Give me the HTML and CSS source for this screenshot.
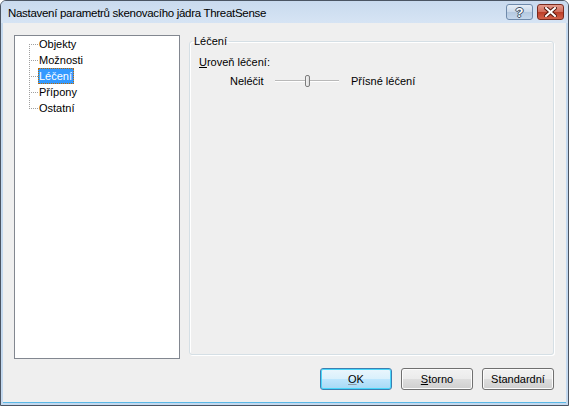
FILE: index.html
```html
<!DOCTYPE html>
<html lang="cs">
<head>
  <meta charset="UTF-8" />
  <title>Nastavení parametrů skenovacího jádra ThreatSense</title>
  <link rel="stylesheet" href="styles.css">
</head>
<body>

  <div class="window">
    <div class="titlebar">
      <span class="title">Nastavení parametrů skenovacího jádra ThreatSense</span>
      <div class="caption-buttons">
        <div class="cap-btn help">?</div>
        <div class="cap-btn close">
          <svg width="13" height="10" viewBox="0 0 13 10">
            <path d="M2 1 L11 9 M11 1 L2 9" stroke="#5a1a10" stroke-width="4" stroke-linecap="square"/>
            <path d="M2 1 L11 9 M11 1 L2 9" stroke="#fff" stroke-width="2" stroke-linecap="square"/>
          </svg>
        </div>
      </div>
    </div>

    <div class="client">
      <div class="main">
        <ul class="tree">
          <li class="first"><span class="label">Objekty</span></li>
          <li><span class="label">Možnosti</span></li>
          <li><span class="label selected">Léčení</span></li>
          <li><span class="label">Přípony</span></li>
          <li class="last"><span class="label">Ostatní</span></li>
        </ul>

        <fieldset class="group">
          <legend>Léčení</legend>
          <div class="level-label"><u>U</u>roveň léčení:</div>
          <div class="slider-row">
            <span class="slider-min">Neléčit</span>
            <div class="slider">
              <div class="thumb"></div>
            </div>
            <span class="slider-max">Přísné léčení</span>
          </div>
        </fieldset>
      </div>

      <div class="buttons">
        <button class="btn default"><u>O</u>K</button>
        <button class="btn"><u>S</u>torno</button>
        <button class="btn">Standardní</button>
      </div>
    </div>
  </div>

</body>
</html>
```

FILE: styles.css
```css
:root {
  --frame: #c4d9ef;
  --client: #efefef;
  --text: #000;
  --tree-border: #828790;
  --group-border: #d5dfe5;
}

* {
  box-sizing: border-box;
}

body {
  margin: 0;
  background: #fff;
  font-family: 'Liberation Sans', Arial, sans-serif;
  font-size: 11px;
  color: var(--text);
}

.window {
  width: 569px;
  height: 406px;
  display: flex;
  flex-direction: column;
  background: var(--frame);
  border: 1px solid #4b5563;
  border-radius: 6px 6px 0 0;
  overflow: hidden;
}

.titlebar {
  height: 22px;
  flex: none;
  display: flex;
  align-items: center;
  justify-content: space-between;
  padding: 0 4px 0 7px;
  background: linear-gradient(#c9daee, #d6e4f4);
}

.title {
  font-size: 11.5px;
  letter-spacing: -0.3px;
  padding-top: 1px;
}

.caption-buttons {
  display: flex;
  gap: 4px;
  align-self: flex-start;
  margin-top: 3px;
}

.cap-btn {
  width: 27px;
  height: 16px;
  border-radius: 3px;
  display: flex;
  align-items: center;
  justify-content: center;
}

.help {
  border: 1px solid #6f8aab;
  background: linear-gradient(#e6eef7 0%, #c9d8ea 50%, #b4c8df 51%, #c5d7ec 100%);
  color: #fff;
  font-weight: bold;
  font-size: 13px;
  text-shadow: 0 0 1px #3c4f66, 1px 0 0 #3c4f66, -1px 0 0 #3c4f66, 0 1px 0 #3c4f66, 0 -1px 0 #3c4f66;
}

.close {
  border: 1px solid #7a2a1e;
  background: linear-gradient(#e39a8c 0%, #d16c5a 50%, #bb3d27 51%, #d3624b 100%);
}

.client {
  flex: 1;
  margin: 0 2px 2px 2px;
  background: var(--client);
  display: flex;
  flex-direction: column;
  padding: 12px 12px 0 11px;
  border-bottom: 1px solid #5ab8e6;
}

.main {
  display: flex;
  gap: 9px;
  height: 324px;
}

.tree {
  width: 166px;
  flex: none;
  margin: 0;
  padding: 0 0 0 14px;
  list-style: none;
  background: #fff;
  border: 1px solid var(--tree-border);
}

.tree li {
  display: flex;
  align-items: center;
  height: 16px;
}

.tree li::before {
  content: "";
  width: 9px;
  height: 16px;
  flex: none;
  background:
    repeating-linear-gradient(to right, #a0a0a0 0 1px, transparent 1px 2px) 0 8px / 9px 1px no-repeat,
    repeating-linear-gradient(to bottom, #a0a0a0 0 1px, transparent 1px 2px) 0 0 / 1px 16px no-repeat;
}

.tree li.first::before {
  background:
    repeating-linear-gradient(to right, #a0a0a0 0 1px, transparent 1px 2px) 0 8px / 9px 1px no-repeat,
    repeating-linear-gradient(to bottom, #a0a0a0 0 1px, transparent 1px 2px) 0 8px / 1px 8px no-repeat;
}

.tree li.last::before {
  background:
    repeating-linear-gradient(to right, #a0a0a0 0 1px, transparent 1px 2px) 0 8px / 9px 1px no-repeat,
    repeating-linear-gradient(to bottom, #a0a0a0 0 1px, transparent 1px 2px) 0 0 / 1px 9px no-repeat;
}

.label {
  line-height: 14px;
  padding: 0 1px 0 0;
  border: 1px solid transparent;
}

.label.selected {
  background: #3399ff;
  color: #fff;
  border: 1px dotted #c06a00;
}

.group {
  flex: 1;
  margin: 0 0 4px 0;
  padding: 0 9px;
  border: 1px solid var(--group-border);
  border-radius: 3px;
  box-shadow: inset 1px 1px 0 #fff, 1px 1px 0 #fff;
  min-width: 0;
}

.group legend {
  margin-left: -7px;
  padding: 0 2px;
  line-height: 13px;
}

.level-label {
  margin-top: 8px;
  line-height: 13px;
}

.slider-row {
  display: flex;
  align-items: center;
  margin-top: 6px;
  padding-left: 31px;
}

.slider-min {
  width: 45px;
}

.slider {
  width: 64px;
  height: 12px;
  display: flex;
  justify-content: center;
  background:
    linear-gradient(#b9b9b9, #b9b9b9) 0 5px / 100% 1px no-repeat,
    linear-gradient(#ffffff, #ffffff) 0 6px / 100% 1px no-repeat;
}

.thumb {
  width: 5px;
  height: 12px;
  border: 1px solid #7d7d7d;
  border-radius: 2px;
  background: linear-gradient(to right, #f4f4f4, #dcdcdc);
}

.slider-max {
  margin-left: 12px;
}

.buttons {
  display: flex;
  justify-content: flex-end;
  gap: 9px;
  margin-top: 9px;
}

.btn {
  width: 72px;
  height: 22px;
  font-family: inherit;
  font-size: 11px;
  color: var(--text);
  border: 1px solid #707070;
  border-radius: 3px;
  background: linear-gradient(#f2f2f2 0%, #ebebeb 50%, #dddddd 51%, #cfcfcf 100%);
  box-shadow: inset 0 0 0 1px #fcfcfc;
  padding: 0;
}

.btn.default {
  border-color: #3c7fb1;
  background: linear-gradient(#eaf6fd 0%, #d9f0fc 50%, #bee6fd 51%, #a7d9f5 100%);
  box-shadow: inset 0 0 0 1px #48d7fb;
}

.btn.default u {
  text-decoration-color: #8a9aa6;
}
```
